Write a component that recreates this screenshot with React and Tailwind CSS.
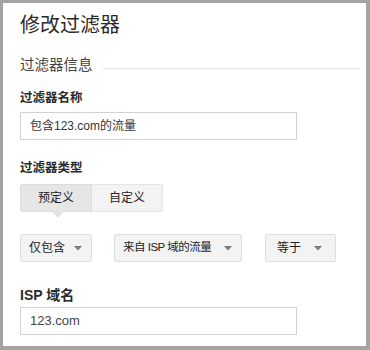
export default function App() {
  const font = { fontFamily: '"Liberation Sans", "Noto Sans CJK SC", sans-serif' };

  const Caret = () => (
    <svg width="8" height="5" viewBox="0 0 8 5" className="shrink-0">
      <path d="M0 0 L8 0 L4 4.5 Z" fill="#7a7a7a" />
    </svg>
  );

  return (
    <div className="w-[370px] h-[350px] bg-[#a4a4a4] pt-[3px] pl-[3px] pr-[4px] pb-[4px]" style={font}>
      <div className="h-full bg-white pl-[17px] pt-[8px] text-[#333]">
        <h1 className="text-[20px] leading-[28px] font-normal text-[#2b2b2b]">修改过滤器</h1>

        <div className="mt-[16px] flex items-center pr-[6px]">
          <span className="text-[14.5px] leading-[20px] text-[#444]">过滤器信息</span>
          <div className="ml-[10px] flex-1 h-px bg-[#e2e2e2] mt-[6px]" />
        </div>

        <div className="mt-[14px] text-[12.5px] leading-[18px] font-bold text-[#2a2a2a]">过滤器名称</div>
        <div className="mt-[5px] w-[277px] h-[28px] border border-[#d2d2d2] flex items-center pl-[9px] text-[12px] text-[#333]">
          包含123.com的流量
        </div>

        <div className="mt-[19px] text-[12.5px] leading-[18px] font-bold text-[#2a2a2a]">过滤器类型</div>
        <div className="mt-[7px] flex">
          <div className="relative w-[72px] h-[28px] bg-[#e6e6e6] border border-[#dcdcdc] rounded-l-[2px] flex items-center justify-center text-[12px] text-[#222]">
            预定义
            <div className="absolute left-[31px] top-full w-0 h-0 border-l-[6px] border-r-[6px] border-t-[7px] border-l-transparent border-r-transparent border-t-[#e2e2e2]" />
          </div>
          <div className="w-[71px] h-[28px] bg-[#f3f3f3] border border-l-0 border-[#e4e4e4] rounded-r-[2px] flex items-center justify-center text-[12px] text-[#222]">
            自定义
          </div>
        </div>

        <div className="mt-[22px] flex whitespace-nowrap">
          <div className="w-[72px] h-[28px] bg-[#f3f3f3] border border-[#dedede] rounded-[2px] flex items-center justify-between pl-[8px] pr-[9px] text-[12px] text-[#222]">
            <span>仅包含</span>
            <Caret />
          </div>
          <div className="ml-[22px] w-[128px] h-[28px] bg-[#f3f3f3] border border-[#dedede] rounded-[2px] flex items-center justify-between pl-[8px] pr-[9px] text-[11.5px] tracking-[-0.5px] text-[#222]">
            <span>来自 ISP 域的流量</span>
            <Caret />
          </div>
          <div className="ml-[23px] w-[71px] h-[28px] bg-[#f3f3f3] border border-[#dedede] rounded-[2px] flex items-center justify-between pl-[11px] pr-[13px] text-[12px] text-[#222]">
            <span>等于</span>
            <Caret />
          </div>
        </div>

        <div className="mt-[23px] text-[14px] leading-[20px] font-bold text-[#2a2a2a]">ISP 域名</div>
        <div className="mt-[2px] w-[277px] h-[28px] border border-[#d2d2d2] flex items-center pl-[9px] text-[13px] text-[#444]">
          123.com
        </div>
      </div>
    </div>
  );
}
